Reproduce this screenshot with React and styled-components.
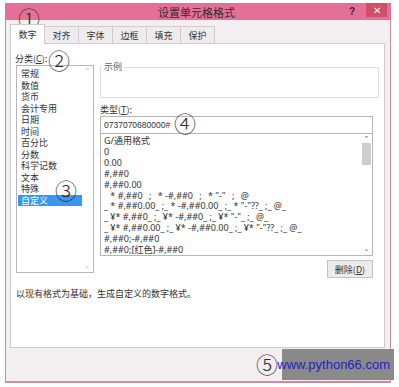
import styled, { createGlobalStyle } from "styled-components";

const GlobalStyle = createGlobalStyle`
  body {
    margin: 0;
    background: #ffffff;
    font-family: "Noto Sans CJK SC", "Noto Sans", sans-serif;
    color: #333;
  }
`;

const categories = ["常规", "数值", "货币", "会计专用", "日期", "时间", "百分比", "分数", "科学记数", "文本", "特殊", "自定义"];

const formats = [
  "G/通用格式",
  "0",
  "0.00",
  "#,##0",
  "#,##0.00",
  '_ * #,##0_ ;_ * -#,##0_ ;_ * "-"_ ;_ @_',
  '_ * #,##0.00_ ;_ * -#,##0.00_ ;_ * "-"??_ ;_ @_',
  '_ ¥* #,##0_ ;_ ¥* -#,##0_ ;_ ¥* "-"_ ;_ @_',
  '_ ¥* #,##0.00_ ;_ ¥* -#,##0.00_ ;_ ¥* "-"??_ ;_ @_',
  "#,##0;-#,##0",
  "#,##0;[红色]-#,##0",
];

const tabs = ["数字", "对齐", "字体", "边框", "填充", "保护"];

const Page = styled.div`
  position: relative;
  width: 399px;
  height: 387px;
  padding: 3px 0 0 5px;
  box-sizing: border-box;
`;

const Window = styled.div`
  width: 386px;
  height: 380px;
  box-sizing: border-box;
  border: 1px solid #c98ea1;
  border-top: none;
  border-bottom-width: 2px;
  background: #f3eff1;
  display: flex;
  flex-direction: column;
`;

const TitleBar = styled.div`
  height: 17px;
  background: #e46f97;
  display: flex;
  align-items: center;
  margin: 0 -1px;
`;

const Title = styled.div`
  flex: 1;
  text-align: center;
  padding-left: 44px;
  font-size: 11px;
  color: #3a2a30;
`;

const Help = styled.div`
  width: 16px;
  font-size: 10px;
  font-weight: bold;
  color: #3a2a30;
  text-align: center;
  font-family: "Liberation Sans", sans-serif;
`;

const Close = styled.div`
  width: 21px;
  height: 14px;
  margin: -3px 4px 0 6px;
  background: #cf5066;
  color: #fff;
  font-size: 10px;
  font-family: "Liberation Sans", sans-serif;
  display: flex;
  align-items: center;
  justify-content: center;
`;

const TabRow = styled.div`
  display: flex;
  align-items: flex-end;
  height: 23px;
  padding-left: 5px;
`;

const Tab = styled.div`
  width: 35px;
  height: ${(p) => (p.$active ? "20px" : "17px")};
  box-sizing: border-box;
  border: 1px solid #d2cace;
  border-bottom: none;
  margin-left: -1px;
  background: ${(p) => (p.$active ? "#ffffff" : "#f0ecee")};
  font-size: 9px;
  display: flex;
  align-items: center;
  justify-content: center;
  color: #333;
  position: relative;
  z-index: ${(p) => (p.$active ? 1 : 0)};
  margin-bottom: ${(p) => (p.$active ? "-1px" : "0")};
`;

const Panel = styled.div`
  margin: 0 5px 0 4px;
  height: 305px;
  box-sizing: border-box;
  background: #ffffff;
  border: 1px solid #d2cace;
  padding: 8px 5px 0 5px;
  display: flex;
  flex-direction: column;
`;

const Columns = styled.div`
  display: grid;
  grid-template-columns: 78px 1fr;
  column-gap: 6px;
`;

const Label = styled.div`
  font-size: 9px;
  line-height: 13px;
  height: 13px;
  color: #333;
  margin-left: ${(p) => p.$indent || 0}px;
  margin-top: ${(p) => p.$top || 0}px;
`;

const LeftCol = styled.div`
  display: flex;
  flex-direction: column;
`;

const RightCol = styled.div`
  display: flex;
  flex-direction: column;
  padding-top: 14px;
`;

const ListBox = styled.div`
  position: relative;
  height: ${(p) => p.$height}px;
  box-sizing: border-box;
  border: 1px solid #b9b4b7;
  border-top-width: ${(p) => (p.$noTop ? 0 : 1)}px;
  margin-right: ${(p) => p.$right || 0}px;
  background: #fff;
  padding: ${(p) => p.$pad};
  display: flex;
  flex-direction: column;
`;

const ListItem = styled.div`
  height: ${(p) => p.$h}px;
  line-height: ${(p) => p.$h}px;
  font-size: 9px;
  padding-left: 3px;
  margin-right: ${(p) => p.$gutter}px;
  white-space: pre;
  overflow: hidden;
  background: ${(p) => (p.$selected ? "#3a97f0" : "transparent")};
  color: ${(p) => (p.$selected ? "#ffffff" : "#333")};
  font-family: ${(p) => (p.$latin ? '"Noto Sans", "Noto Sans CJK SC", sans-serif' : "inherit")};
`;

const ScrollBar = styled.div`
  position: absolute;
  top: 0;
  right: 0;
  bottom: 0;
  width: 11px;
  display: flex;
  flex-direction: column;
  justify-content: space-between;
  align-items: center;
  background: ${(p) => (p.$track ? "#f0f0f0" : "transparent")};
`;

const Arrow = styled.div`
  height: 11px;
  font-size: 7px;
  line-height: 11px;
  color: ${(p) => p.$color};
  font-family: "DejaVu Sans", sans-serif;
`;

const Thumb = styled.div`
  width: 9px;
  height: 22px;
  background: #cdcdcd;
  margin-top: -2px;
`;

const ScrollMiddle = styled.div`
  flex: 1;
  width: 100%;
  display: flex;
  justify-content: center;
`;

const Group = styled.fieldset`
  margin: -4px 0 0 0;
  padding: 0;
  height: 36px;
  box-sizing: border-box;
  border: 1px solid #e2dde0;
  min-width: 0;
  legend {
    font-size: 9px;
    color: #666;
    padding: 0 2px;
    margin-left: 1px;
    line-height: 10px;
  }
`;

const TypeInput = styled.div`
  height: 18px;
  box-sizing: border-box;
  border: 1px solid #b9b4b7;
  margin-right: 6px;
  font-size: 8.5px;
  line-height: 16px;
  padding-left: 3px;
  font-family: "Liberation Sans", sans-serif;
  color: #333;
`;

const ButtonRow = styled.div`
  display: flex;
  justify-content: flex-end;
  margin: 4px 6px 0 0;
`;

const Button = styled.div`
  width: 46px;
  height: 18px;
  box-sizing: border-box;
  border: 1px solid #c6c1c4;
  background: #ececec;
  font-size: 9px;
  display: flex;
  align-items: center;
  justify-content: center;
  color: #333;
`;

const Hint = styled.div`
  font-size: 9px;
  margin-top: 9px;
  color: #333;
`;

const Footer = styled.div`
  flex: 1;
`;

const Mark = styled.div`
  position: absolute;
  left: ${(p) => p.$x}px;
  top: ${(p) => p.$y}px;
  font-size: 22px;
  line-height: 22px;
  color: #2b2b2b;
  font-family: "Noto Sans CJK SC", serif;
  font-weight: 300;
  pointer-events: none;
`;

const Watermark = styled.div`
  position: absolute;
  left: 282px;
  top: 349px;
  width: 112px;
  height: 31px;
  background: #8a8a8a;
  display: flex;
  align-items: center;
  justify-content: flex-end;
  padding-right: 4px;
  box-sizing: border-box;
  font-family: "Liberation Sans", sans-serif;
  font-size: 13px;
  color: #2323c8;
`;

function Scroll({ track, thumb, color }) {
  return (
    <ScrollBar $track={track}>
      <Arrow $color={color}>⌃</Arrow>
      <ScrollMiddle>{thumb && <Thumb />}</ScrollMiddle>
      <Arrow $color={color}>⌄</Arrow>
    </ScrollBar>
  );
}

export default function App() {
  return (
    <Page>
      <GlobalStyle />
      <Window>
        <TitleBar>
          <Title>设置单元格格式</Title>
          <Help>?</Help>
          <Close>✕</Close>
        </TitleBar>
        <TabRow>
          {tabs.map((t, i) => (
            <Tab key={t} $active={i === 0}>
              {t}
            </Tab>
          ))}
        </TabRow>
        <Panel>
          <Columns>
            <LeftCol>
              <Label $indent={-1}>分类(<u>C</u>):</Label>
              <ListBox $height={208} $pad="2px 0 0 1px">
                {categories.map((c) => (
                  <ListItem key={c} $h={11.5} $gutter={11} $selected={c === "自定义"}>
                    {c}
                  </ListItem>
                ))}
                <Scroll color="#b8b8b8" />
              </ListBox>
            </LeftCol>
            <RightCol>
              <Group>
                <legend>示例</legend>
              </Group>
              <Label $top={5}>类型(<u>T</u>):</Label>
              <TypeInput>0737070680000#</TypeInput>
              <ListBox $height={122} $pad="1px 0 0 0" $right={6} $noTop>
                {formats.map((f) => (
                  <ListItem key={f} $h={11} $gutter={12} $latin>
                    {f}
                  </ListItem>
                ))}
                <Scroll color="#555" thumb />
              </ListBox>
              <ButtonRow>
                <Button>
                  删除(<u>D</u>)
                </Button>
              </ButtonRow>
            </RightCol>
          </Columns>
          <Hint>以现有格式为基础，生成自定义的数字格式。</Hint>
        </Panel>
        <Footer />
      </Window>
      <Mark $x={18} $y={6}>①</Mark>
      <Mark $x={48} $y={48}>②</Mark>
      <Mark $x={55} $y={178}>③</Mark>
      <Mark $x={174} $y={111}>④</Mark>
      <Mark $x={256} $y={352}>⑤</Mark>
      <Watermark>www.python66.com</Watermark>
    </Page>
  );
}
